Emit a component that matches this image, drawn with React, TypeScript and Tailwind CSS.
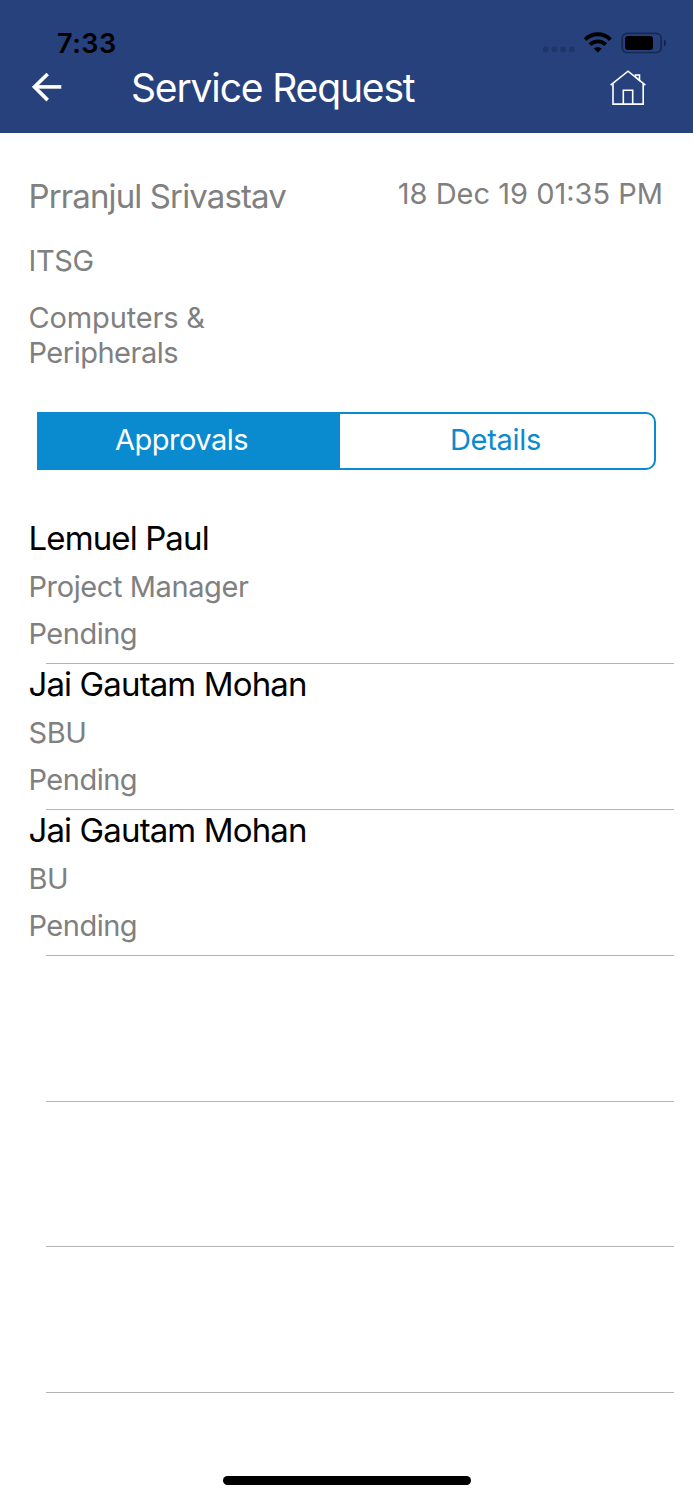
import clsx from 'clsx';
import { useState } from 'react';

type Approval = { name: string; role: string; status: string };

const approvals: Approval[] = [
  { name: 'Lemuel Paul', role: 'Project Manager', status: 'Pending' },
  { name: 'Jai Gautam Mohan', role: 'SBU', status: 'Pending' },
  { name: 'Jai Gautam Mohan', role: 'BU', status: 'Pending' },
];

// empty cells the table keeps below the last approval
const EMPTY_ROWS = 3;

function StatusBar() {
  return (
    <div className="h-[61px] pt-[25px] pl-[57px] pr-[27px] flex items-center justify-between text-black">
      <span className="pt-0.5 text-[27px] leading-9 font-semibold tracking-[0.5px]">7:33</span>
      <svg width="124" height="24" viewBox="0 0 124 24">
        <g fill="#20356a">
          <rect x="1" y="15.8" width="5.5" height="5.5" rx="1.6" />
          <rect x="9.7" y="15.8" width="5.5" height="5.5" rx="1.6" />
          <rect x="18.4" y="15.8" width="5.5" height="5.5" rx="1.6" />
          <rect x="27.1" y="15.8" width="5.5" height="5.5" rx="1.6" />
        </g>
        <g transform="translate(55.8 2)" fill="none" stroke="#000">
          <path d="M-12.6 6.6A17.8 17.8 0 0 1 12.6 6.6" strokeWidth="4" />
          <path d="M-7.9 11.6A11.2 11.2 0 0 1 7.9 11.6" strokeWidth="3.8" />
          <path d="M-4 15.5A5.8 5.8 0 0 1 4 15.5L0 19.6Z" fill="#000" stroke="none" />
        </g>
        <rect x="80.2" y="2.3" width="39" height="19.2" rx="5" fill="none" stroke="#172951" strokeWidth="1.7" />
        <rect x="83" y="5" width="28" height="14" rx="3" />
        <path d="M122 8.6c1.3.6 2 1.9 2 3.4s-.7 2.8-2 3.4z" fill="#14244a" />
      </svg>
    </div>
  );
}

function Header() {
  return (
    <header className="h-[133px] bg-[#27417d]">
      <StatusBar />
      <div className="h-[54px] pl-8 pr-[47px] flex items-center text-white">
        <button aria-label="Back" className="w-[99px]">
          <svg width="30" height="30" viewBox="0 0 30 30" fill="none" stroke="currentColor" strokeWidth="3.6">
            <path d="M29.3 13.9H2" />
            <path d="M15.7 1L2.4 13.9L15.7 27.1" />
          </svg>
        </button>
        <h1 className="flex-1 text-[39px] leading-[54px] tracking-[-1.15px]">Service Request</h1>
        <button aria-label="Home">
          <svg width="36" height="36" viewBox="0 0 36 36" fill="none" stroke="currentColor" strokeWidth="1.6">
            <path d="M0.6 15.2L18 1.2L35.4 15.2" />
            <path d="M3 13.4V34.1H33.2V13.4" />
            <path d="M13.3 34.1V20.2H22.7V34.1" />
            <path d="M25.4 7.2V5H29.5V10.4L25.4 7.2" />
          </svg>
        </button>
      </div>
    </header>
  );
}

function ApprovalRow({ approval }: { approval?: Approval }) {
  return (
    <li>
      <div className="h-[144.9px] pl-[28.5px]">
        {approval && (
          <>
            <p className="h-10 leading-10 text-[33px] tracking-[-0.88px] text-black">{approval.name}</p>
            <p className="mt-[9px] h-10 leading-10 text-[29px] tracking-[-0.4px] text-[#808080]">{approval.role}</p>
            <p className="mt-[7px] h-10 leading-10 text-[29px] tracking-[-0.5px] text-[#808080]">{approval.status}</p>
          </>
        )}
      </div>
      <div className="h-px ml-[46px] mr-[19px] bg-[#b4b4b6]" />
    </li>
  );
}

export default function App() {
  const [tab, setTab] = useState<'approvals' | 'details'>('approvals');

  return (
    <div className="w-[693px] h-[1500px] flex flex-col overflow-hidden bg-white font-['Inter','Liberation_Sans',sans-serif]">
      <Header />

      {/* Request summary */}
      <section className="pt-[43px] pl-[28.5px] pr-[30px] text-[#808080]">
        <div className="flex items-start justify-between">
          <h2 className="text-[33px] leading-10 tracking-[-0.88px]">Prranjul Srivastav</h2>
          <p className="text-[29px] leading-9">18 Dec 19 01:35 PM</p>
        </div>
        <p className="mt-[26px] text-[29px] leading-[37px] tracking-[-0.4px]">ITSG</p>
        <p className="mt-[21px] text-[29px] leading-[35px]">
          <span className="block tracking-[-0.15px]">Computers &amp;</span>
          <span className="block tracking-[-0.5px]">Peripherals</span>
        </p>
      </section>

      {/* Tabs */}
      <div className="mt-[42px] ml-[37px] mr-[37px] h-[58px] shrink-0 flex rounded-r-[10px] border-2 border-[#0a8acf] text-[29px] leading-[52px] overflow-hidden">
        <button
          onClick={() => setTab('approvals')}
          className={clsx('w-[301px] pr-4 pb-0.5 tracking-[-0.5px]', tab === 'approvals' ? 'bg-[#0a8acf] text-white' : 'text-[#0a8acf]')}
        >
          Approvals
        </button>
        <button
          onClick={() => setTab('details')}
          className={clsx('flex-1 pr-[3px] pb-0.5 tracking-[-0.3px]', tab === 'details' ? 'bg-[#0a8acf] text-white' : 'text-[#0a8acf]')}
        >
          Details
        </button>
      </div>

      <ul className="mt-[48px]">
        {approvals.map((a, i) => (
          <ApprovalRow key={i} approval={a} />
        ))}
        {Array.from({ length: EMPTY_ROWS }, (_, i) => (
          <ApprovalRow key={i} />
        ))}
      </ul>

      {/* Home indicator */}
      <div className="mt-auto mb-[15px] ml-[223px] w-[248px] h-[9px] shrink-0 rounded-full bg-black" />
    </div>
  );
}
